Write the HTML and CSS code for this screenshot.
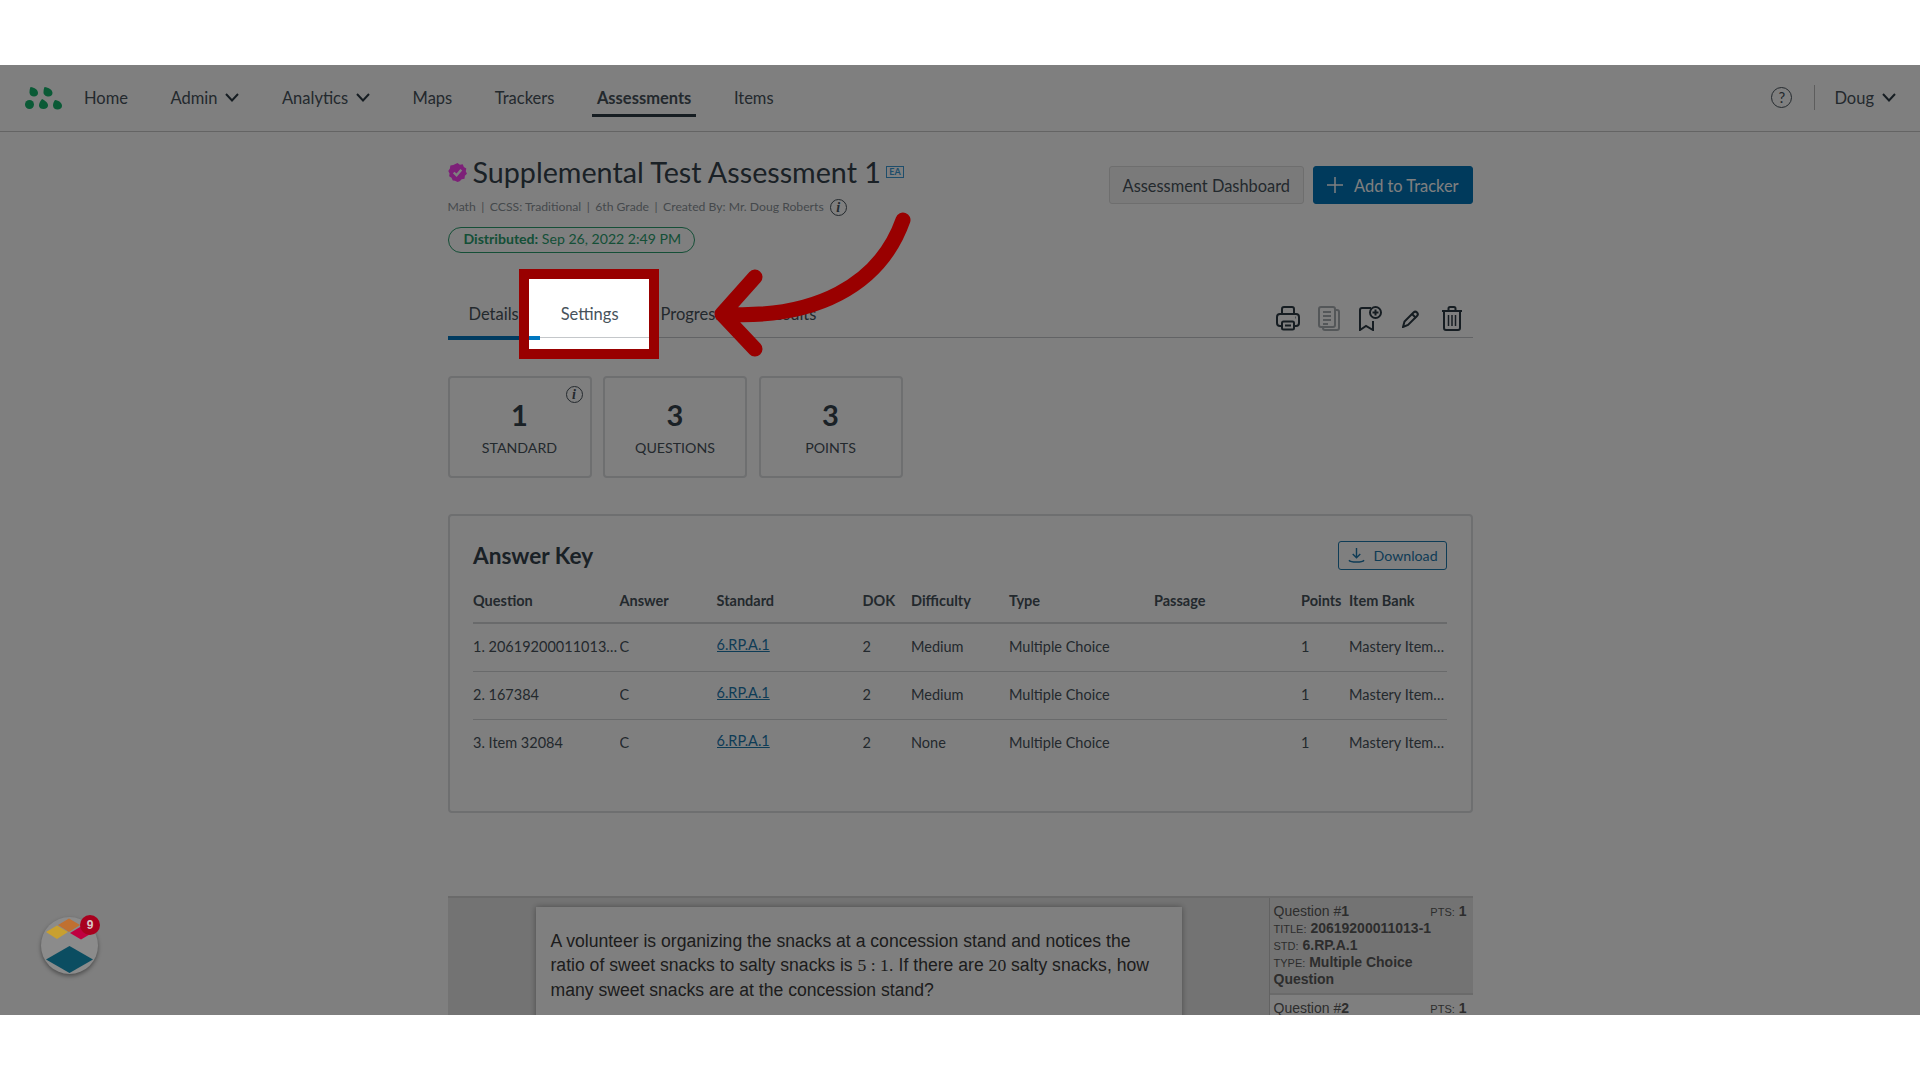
FILE: index.html
```html
<!DOCTYPE html>
<html lang="en">
  <head>
    <meta charset="UTF-8" />
    <meta name="viewport" content="width=device-width, initial-scale=1.0" />
    <link rel="stylesheet" href="styles.css">
    <title>Supplemental Test Assessment 1</title>
  </head>
  <body>
    <div class="stage">
      <nav class="nav">
        <svg class="logo" viewBox="0 0 38 24" width="38" height="24">
          <path d="M5.5 1c4 .3 7.5 3 7.5 6 0 2-1.6 3.500-4 3.500S4.500 9 4.500 6.500c0-2 .3-4 1-5.500z" />
          <path d="M19.500 1c4 .3 8 3 8 6 0 2-1.600 3.500-4 3.500S18.500 9 18.500 6.500c0-2 .3-4 1-5.500z" />
          <circle cx="4.500" cy="18.500" r="4.500" />
          <path d="M17 13c3 1.500 6 3.500 6 6.500 0 2-2 3.500-4.500 3.500S14 22 14 19.500c0-2.500 1.500-4.500 3-6.500z" />
          <path d="M30 14c4 .5 7 3 7 6 0 2-2 3.500-4.500 3.500S28 22 28 19.500c0-2 .8-4 2-5.500z" />
        </svg>
        <a class="nav-item">Home</a>
        <a class="nav-item">Admin
          <svg class="chev" viewBox="0 0 14 9" width="14" height="9"><path d="M1 1l6 6.500L13 1" /></svg>
        </a>
        <a class="nav-item">Analytics
          <svg class="chev" viewBox="0 0 14 9" width="14" height="9"><path d="M1 1l6 6.500L13 1" /></svg>
        </a>
        <a class="nav-item">Maps</a>
        <a class="nav-item">Trackers</a>
        <a class="nav-item active">Assessments</a>
        <a class="nav-item">Items</a>
        <div class="nav-right">
          <span class="help">?</span>
          <span class="nav-sep"></span>
          <a class="nav-item">Doug
            <svg class="chev" viewBox="0 0 14 9" width="14" height="9"><path d="M1 1l6 6.500L13 1" /></svg>
          </a>
        </div>
      </nav>

      <main class="content">
        <div class="head">
          <div>
            <h1 class="title">
              <svg class="verified" viewBox="0 0 20 20" width="19" height="19">
                <path class="verified-bg" d="M10 0l2.500 1.800 3-.4 1.200 2.800 2.600 1.500-.6 3 1.300 2.700-2.200 2.100-.4 3-3 .5-2.100 2.200L10 20l-2.700-1.200-2.300-.5-1.300-2.700-2.500-1.600.4-3L.3 8.300 2 5.700l.5-3 3-.5z" />
                <path class="verified-check" d="M6 10l3 3 5-6" />
              </svg>
              Supplemental Test Assessment 1
              <span class="ea">EA</span>
            </h1>
            <div class="meta">
              <span>Math</span><i>|</i><span>CCSS: Traditional</span><i>|</i><span>6th Grade</span><i>|</i><span>Created By: Mr. Doug Roberts</span>
              <span class="info">i</span>
            </div>
            <div class="pill"><b>Distributed:</b> Sep 26, 2022 2:49 PM</div>
          </div>
          <div class="actions">
            <button class="btn">Assessment Dashboard</button>
            <button class="btn primary">
              <svg viewBox="0 0 16 16" width="16" height="16"><path d="M8 0v16M0 8h16" /></svg>
              Add to Tracker
            </button>
          </div>
        </div>

        <div class="tabs">
          <a class="tab current">Details</a>
          <a class="tab">Settings</a>
          <a class="tab">Progress</a>
          <a class="tab">Results</a>
          <div class="tools">
            <svg viewBox="0 0 24 25" width="24" height="25">
              <path d="M6 8V3a2 2 0 0 1 2-2h8a2 2 0 0 1 2 2v5" />
              <path d="M6 20H4a3 3 0 0 1-3-3v-6a3 3 0 0 1 3-3h16a3 3 0 0 1 3 3v6a3 3 0 0 1-3 3h-2" />
              <rect x="6" y="15.5" width="12" height="8" rx="1.5" />
              <path d="M9 19.5h6M19 11.500h.5" />
            </svg>
            <svg class="off" viewBox="0 0 22 25" width="22" height="25">
              <rect x="5" y="4" width="16" height="20" rx="2" />
              <rect x="1" y="1" width="16" height="20" rx="2" class="paper" />
              <path d="M5 6h8M5 10h8M5 14h8M5 18h5" />
            </svg>
            <svg viewBox="0 0 24 25" width="24" height="25">
              <path d="M13 2H4a2 2 0 0 0-2 2v20l6-4 7 4v-9" />
              <circle cx="17.5" cy="6.5" r="5.5" />
              <path d="M17.5 3.500v6M14.500 6.500h6" />
            </svg>
            <svg class="pencil" viewBox="0 0 18 18" width="18" height="18">
              <path d="M1 17l1.500-5.500L11.500 2.500c1-1 2.500-1 3.500 0s1 2.500 0 3.500L6 15z" />
              <path d="M10 4l4 4" />
            </svg>
            <svg viewBox="0 0 22 25" width="22" height="25">
              <path d="M1 5h20M7.500 5V2.500A1.500 1.500 0 0 1 9 1h4a1.500 1.500 0 0 1 1.500 1.500V5" />
              <path d="M3 5v17a2 2 0 0 0 2 2h12a2 2 0 0 0 2-2V5" />
              <path class="bars" d="M7.500 9v11M11 9v11M14.500 9v11" />
            </svg>
          </div>
        </div>

        <div class="stats">
          <div class="stat">
            <span class="info stat-info">i</span>
            <strong>1</strong>
            <span>STANDARD</span>
          </div>
          <div class="stat"><strong>3</strong><span>QUESTIONS</span></div>
          <div class="stat"><strong>3</strong><span>POINTS</span></div>
        </div>

        <section class="panel">
          <div class="panel-head">
            <h2>Answer Key</h2>
            <button class="download">
              <svg viewBox="0 0 18 18" width="17" height="17">
                <path d="M9 1v10M5 7.500L9 11.500l4-4M1 14c2 2.500 14 2.500 16 0" />
              </svg>
              Download
            </button>
          </div>
          <table class="key">
            <colgroup>
              <col class="c-question" /><col class="c-answer" /><col class="c-standard" />
              <col class="c-dok" /><col class="c-difficulty" /><col class="c-type" />
              <col class="c-passage" /><col class="c-points" /><col class="c-bank" />
            </colgroup>
            <thead>
              <tr>
                <th>Question</th><th>Answer</th><th>Standard</th><th>DOK</th><th>Difficulty</th>
                <th>Type</th><th>Passage</th><th>Points</th><th>Item Bank</th>
              </tr>
            </thead>
            <tbody>
              <tr>
                <td>1. 20619200011013-1</td><td>C</td><td><a class="std">6.RP.A.1</a></td><td>2</td><td>Medium</td>
                <td>Multiple Choice</td><td></td><td>1</td><td>Mastery Item Bank</td>
              </tr>
              <tr>
                <td>2. 167384</td><td>C</td><td><a class="std">6.RP.A.1</a></td><td>2</td><td>Medium</td>
                <td>Multiple Choice</td><td></td><td>1</td><td>Mastery Item Bank</td>
              </tr>
              <tr>
                <td>3. Item 32084</td><td>C</td><td><a class="std">6.RP.A.1</a></td><td>2</td><td>None</td>
                <td>Multiple Choice</td><td></td><td>1</td><td>Mastery Item Bank</td>
              </tr>
            </tbody>
          </table>
        </section>

        <section class="preview">
          <div class="sheet">
            <div class="question">
              A volunteer is organizing the snacks at a concession stand and notices the
              ratio of sweet snacks to salty snacks is <span class="math">5 : 1</span>. If there are <span class="math">20</span> salty snacks, how
              many sweet snacks are at the concession stand?
            </div>
          </div>
          <aside class="qlist">
            <div class="qitem selected">
              <div class="qline"><span>Question #<b>1</b></span><span><small>PTS:</small> <b>1</b></span></div>
              <div><small>TITLE:</small> <b>20619200011013-1</b></div>
              <div><small>STD:</small> <b>6.RP.A.1</b></div>
              <div><small>TYPE:</small> <b>Multiple Choice Question</b></div>
            </div>
            <div class="qitem">
              <div class="qline"><span>Question #<b>2</b></span><span><small>PTS:</small> <b>1</b></span></div>
            </div>
          </aside>
        </section>
      </main>

      <!-- tutorial callout: dims everything except the box -->
      <div class="spot"></div>
      <svg class="arrow" viewBox="0 0 220 150" width="220" height="150">
        <path d="M203 13C180 78 115 113 22 107M55 70L22 107L55 142" />
      </svg>

      <div class="widget">
        <svg viewBox="0 0 57 57" width="57" height="57">
          <path fill="#c8a030" d="M5 15l11-6.500L27 15l-11 7z" />
          <path fill="#c07030" d="M17 8l11-6.500L39 8l-11 7z" />
          <path fill="#c00040" d="M29 16l11-6.500L51 16l-11 6.500z" />
          <path fill="#0b4d61" d="M5 42.500L28.500 29 52 42.500 28.500 56z" />
        </svg>
        <span class="badge">9</span>
      </div>
    </div>
  </body>
</html>
```

FILE: styles.css
```css
* {
  box-sizing: border-box;
}
body {
  margin: 0;
  background-color: #fff;
  color: #47525b;
  font-family: Lato, "Open Sans", sans-serif;
}
.stage {
  position: relative;
  height: 950px;
  margin-top: 65px;
  overflow: hidden;
  background-color: #fff;
}

/* top nav */
.nav {
  display: flex;
  align-items: center;
  gap: 42.5px;
  height: 67px;
  padding: 0 24px 1px 25px;
  border-bottom: 1px solid #c9c9c9;
  font-size: 16.5px;
  line-height: 22px;
}
.logo {
  flex-shrink: 0;
  fill: #14b46c;
  margin-right: -21.5px;
  margin-top: 1px;
}
.nav-item {
  display: inline-flex;
  align-items: center;
  gap: 8px;
  margin: 0 -5px;
  padding: 8px 5px 5px;
  border-bottom: 3px solid transparent;
  white-space: nowrap;
}
.nav-item.active {
  font-weight: 700;
  border-bottom-color: #2d3b45;
}
.chev {
  fill: none;
  stroke: #2d3b45;
  stroke-width: 2;
}
.nav-right {
  display: flex;
  align-items: center;
  margin-left: auto;
}
.help {
  width: 21px;
  height: 21px;
  border: 1.5px solid #47525b;
  border-radius: 50%;
  font-size: 15px;
  line-height: 18px;
  text-align: center;
}
.nav-sep {
  width: 1px;
  height: 25px;
  margin: 0 19px 0 22px;
  background-color: #bbb;
}

/* page */
.content {
  width: 1025px;
  margin: 0 auto;
}
.head {
  display: flex;
  justify-content: space-between;
  padding-top: 23px;
}
.title {
  display: flex;
  align-items: center;
  margin: 0;
  font-size: 28.7px;
  font-weight: 400;
  line-height: 34px;
  color: #35424c;
}
.verified {
  margin-right: 6px;
}
.verified-bg {
  fill: #fa40f0;
}
.verified-check {
  fill: none;
  stroke: #fff;
  stroke-width: 2.5;
}
.ea {
  width: 18px;
  height: 12px;
  margin-left: 5px;
  border: 1.5px solid #3d9ad6;
  color: #3d9ad6;
  font-size: 9px;
  font-weight: 700;
  line-height: 9px;
  text-align: center;
}
.meta {
  display: flex;
  align-items: center;
  margin-top: 9px;
  font-size: 12.2px;
  line-height: 18px;
  color: #8a9298;
}
.meta i {
  margin: 0 5.5px;
  font-style: normal;
}
.info {
  display: inline-block;
  width: 17px;
  height: 17px;
  margin-left: 6px;
  border: 1px solid #47525b;
  border-radius: 50%;
  color: #47525b;
  font-family: "Liberation Serif", serif;
  font-size: 14px;
  font-style: italic;
  font-weight: 700;
  line-height: 15px;
  text-align: center;
}
.pill {
  display: inline-block;
  height: 26px;
  margin-top: 11px;
  padding: 0 13px 0 15px;
  border: 1.5px solid #2a9e6e;
  border-radius: 13px;
  color: #2a9e6e;
  font-size: 14.1px;
  line-height: 21px;
  white-space: nowrap;
}
.actions {
  display: flex;
  gap: 9px;
  margin-top: 11px;
}
.btn {
  height: 38px;
  padding: 0 13px;
  border: 1px solid #dcdcdc;
  border-radius: 3px;
  background-color: #f5f5f5;
  color: #47525b;
  font-family: inherit;
  font-size: 16.4px;
}
.btn.primary {
  display: flex;
  align-items: center;
  gap: 11px;
  border-color: #0074b8;
  background-color: #0074b8;
  color: #fff;
}
.btn.primary svg {
  stroke: #fff;
  stroke-width: 1.5;
}

/* tabs */
.tabs {
  display: flex;
  align-items: flex-end;
  height: 53px;
  margin-top: 32px;
  border-bottom: 1px solid #c4c7ca;
  font-size: 16.5px;
  line-height: 22px;
}
.tab {
  margin-bottom: -3px;
  padding: 0 21px 11px;
  border-bottom: 4px solid transparent;
}
.tab.current {
  border-bottom-color: #0077c0;
}
.tools {
  display: flex;
  align-items: center;
  gap: 18px;
  margin-left: auto;
  margin-right: 10px;
  margin-bottom: 6px;
}
.tools svg {
  fill: none;
  stroke: #2d3b45;
  stroke-width: 2;
}
.tools .off {
  stroke: #a9aeb2;
}
.tools .paper {
  fill: #fff;
}
.tools .bars {
  stroke-width: 1.5;
}
.tools .pencil {
  margin: 0 3px 0 2px;
}

/* stat cards */
.stats {
  display: flex;
  gap: 11.5px;
  margin-top: 38px;
}
.stat {
  position: relative;
  display: flex;
  flex-direction: column;
  align-items: center;
  width: 144px;
  height: 102px;
  padding-top: 18px;
  border: 2px solid #dcdee0;
  border-radius: 4px;
  font-size: 14.2px;
}
.stat strong {
  font-size: 29px;
  font-weight: 700;
  line-height: 38px;
  margin-bottom: 5px;
  color: #35424c;
}
.stat-info {
  position: absolute;
  top: 8px;
  right: 7px;
}

/* answer key */
.panel {
  height: 299px;
  margin-top: 36px;
  padding: 25px 24px 0 23.5px;
  border: 2px solid #dcdee0;
  border-radius: 4px;
}
.panel-head {
  display: flex;
  align-items: center;
  justify-content: space-between;
}
.panel-head h2 {
  margin: 0;
  font-size: 22.6px;
  font-weight: 700;
  color: #35424c;
}
.download {
  display: flex;
  align-items: center;
  gap: 9px;
  height: 29px;
  width: 109px;
  padding: 0 9px;
  border: 1.5px solid #1d78ad;
  border-radius: 3px;
  background-color: transparent;
  color: #1d78ad;
  font-family: inherit;
  font-size: 14.2px;
}
.download svg {
  flex-shrink: 0;
  fill: none;
  stroke: #1d78ad;
  stroke-width: 1.5;
}
.key {
  width: 974px;
  margin-top: 8px;
  border-collapse: collapse;
  table-layout: fixed;
  font-size: 14.5px;
}
.c-question { width: 146.5px; }
.c-answer { width: 97px; }
.c-standard { width: 146px; }
.c-dok { width: 48.5px; }
.c-difficulty { width: 98px; }
.c-type { width: 145px; }
.c-passage { width: 147px; }
.c-points { width: 48px; }
.c-bank { width: 98px; }
.key th {
  height: 45px;
  padding: 0;
  text-align: left;
  font-weight: 700;
  border-bottom: 2px solid #d2d4d6;
}
.key td {
  height: 48px;
  padding: 0 0 2px;
  overflow: hidden;
  white-space: nowrap;
  text-overflow: ellipsis;
  border-bottom: 1px solid #d2d4d6;
}
.key tr:last-child td {
  border-bottom: 0;
}
.std {
  position: relative;
  top: -2px;
  color: #1d78ad;
  text-decoration: underline;
}

/* question preview */
.preview {
  display: flex;
  height: 140px;
  margin-top: 83px;
  border-top: 2px solid #d4d4d4;
  background-color: #e7e7e7;
  font-family: "Liberation Sans", Arial, sans-serif;
}
.sheet {
  width: 821px;
  padding: 9px 0 0 88px;
}
.question {
  width: 646px;
  height: 200px;
  padding: 21.5px 22px 0 15px;
  background-color: #fff;
  box-shadow: 0 0 6px rgba(0, 0, 0, 0.35);
  font-size: 17.6px;
  line-height: 24.5px;
  color: #3a3a3a;
}
.math {
  font-family: "Liberation Serif", serif;
}
.qlist {
  width: 204px;
  border-left: 1px solid #c4c4c4;
  background-color: #fff;
  font-size: 14px;
  line-height: 17px;
  color: #5a5a5a;
}
.qitem {
  padding: 5px 6px 4px 4px;
}
.qitem.selected {
  height: 97px;
  background-color: #e7e7e7;
  border-bottom: 2px solid #d4d4d4;
}
.qline {
  display: flex;
  justify-content: space-between;
}
.qitem small {
  font-size: 11px;
  line-height: 0;
}

/* tutorial overlay */
.spot {
  position: absolute;
  left: 519px;
  top: 204px;
  width: 140px;
  height: 90px;
  border: 10px solid #990000;
  box-shadow: 0 0 0 2000px rgba(0, 0, 0, 0.5);
}
.arrow {
  position: absolute;
  left: 700px;
  top: 142px;
  fill: none;
  stroke: #990000;
  stroke-width: 15;
  stroke-linecap: round;
  stroke-linejoin: round;
}
.widget {
  position: absolute;
  left: 41px;
  top: 852px;
  width: 57px;
  height: 57px;
  border-radius: 50%;
  background-color: #8b8b8b;
  box-shadow: 0 2px 4px rgba(0, 0, 0, 0.4);
}
.widget svg {
  display: block;
}
.badge {
  position: absolute;
  top: -2px;
  right: -2px;
  width: 20px;
  height: 20px;
  border-radius: 50%;
  background-color: #a8001e;
  color: #d8c8c8;
  font-family: "Liberation Sans", Arial, sans-serif;
  font-size: 12px;
  font-weight: 700;
  line-height: 20px;
  text-align: center;
}
```
